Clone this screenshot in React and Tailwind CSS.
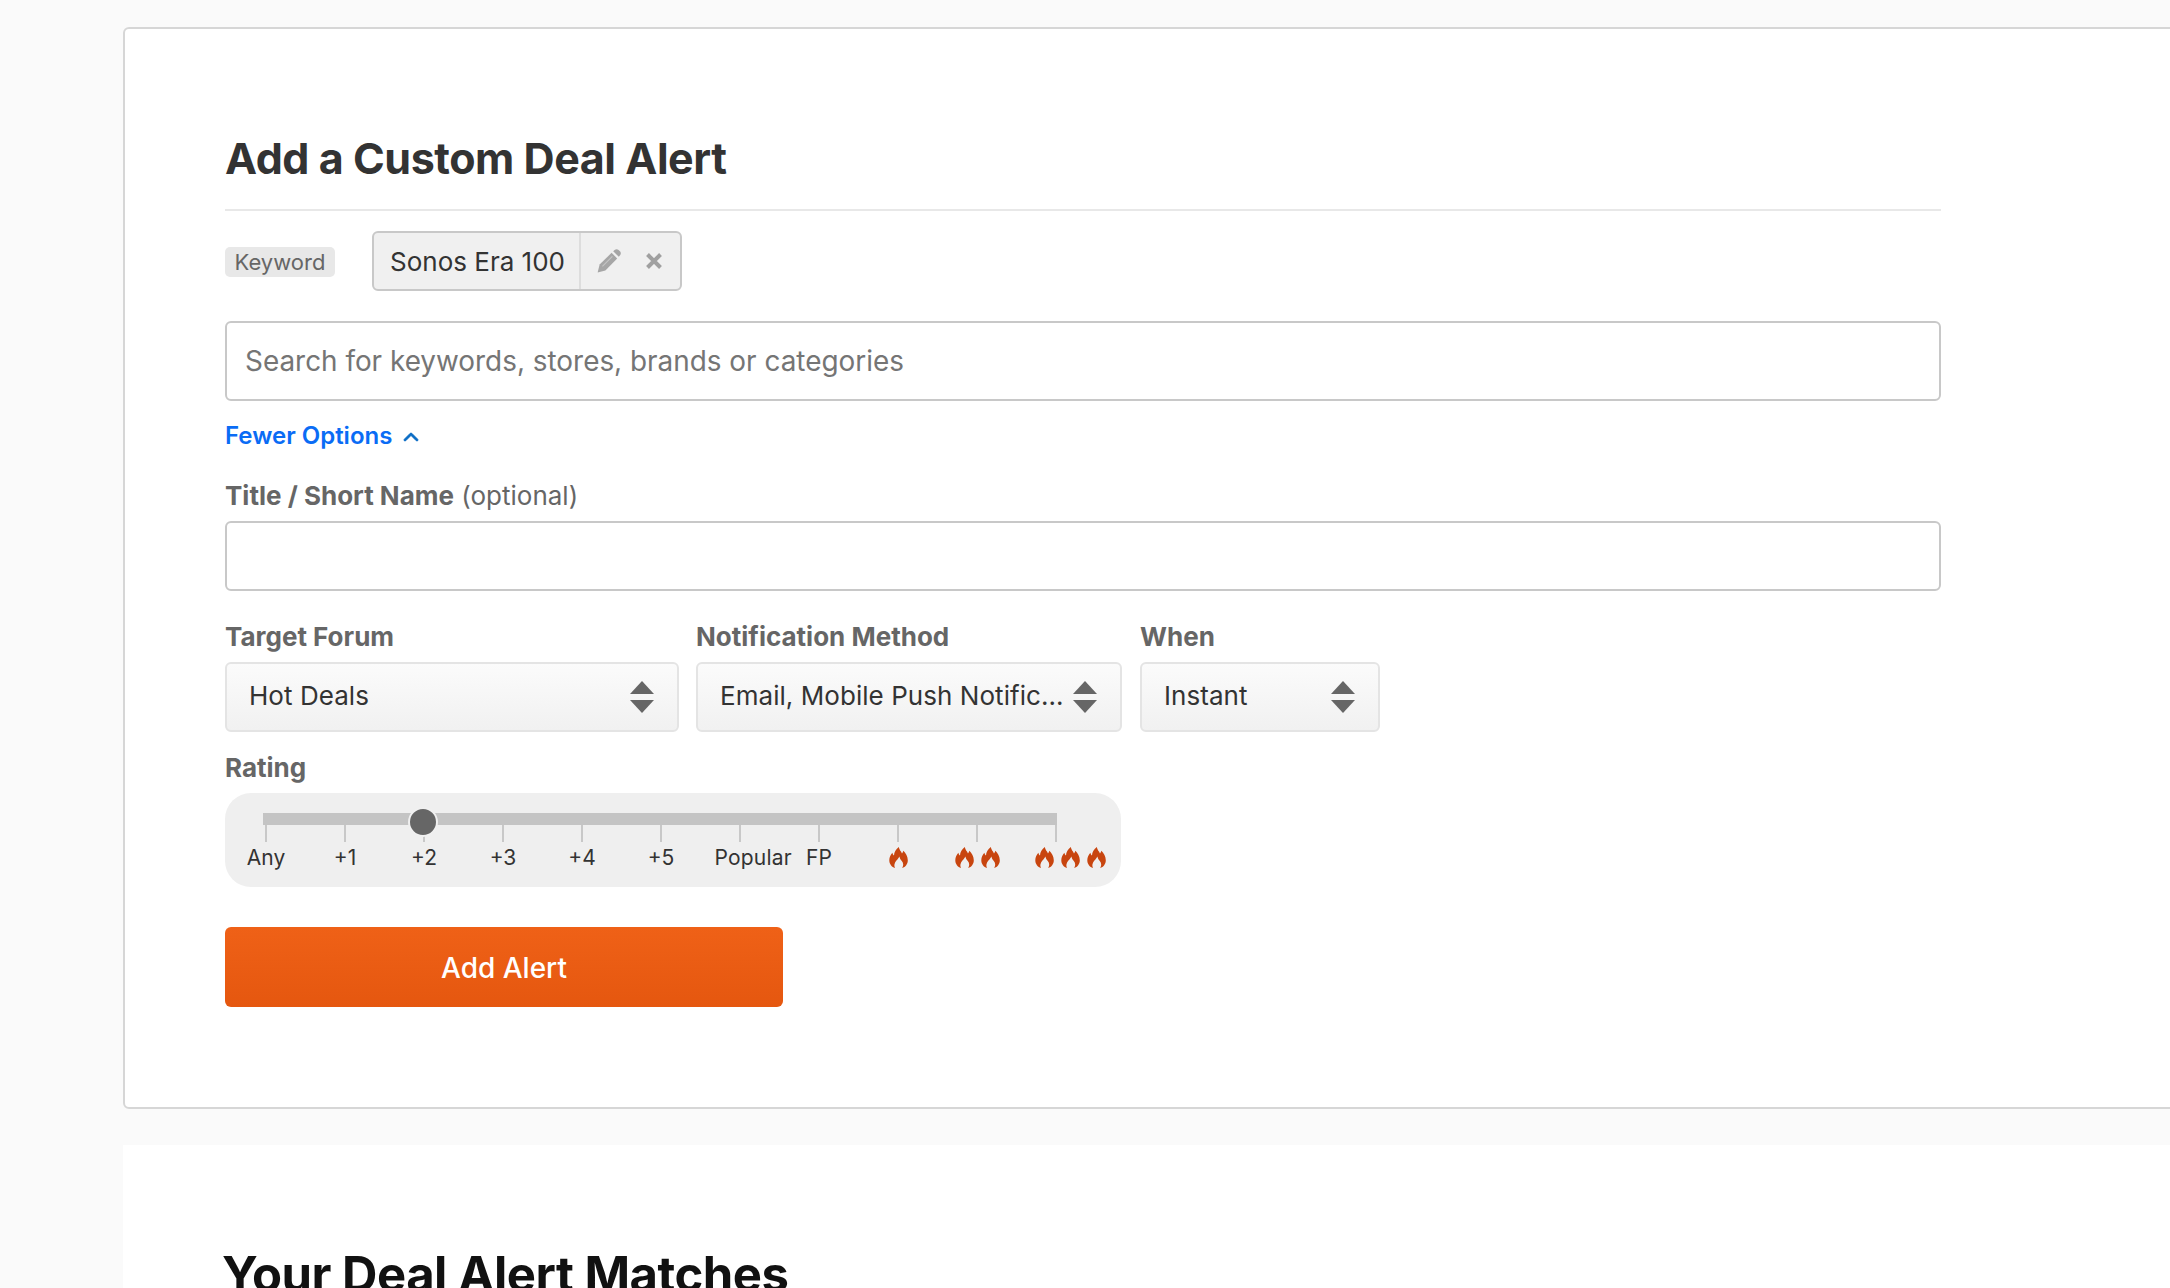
import React from "react";
import { FaChevronUp } from "react-icons/fa6";

const ticks = [0, 1, 2, 3, 4, 5, 6, 7, 8, 9, 10];

const FlameIcon = () => (
    <svg viewBox="0 0 19 21" className="w-[19px] h-[21px] shrink-0" fill="currentColor">
        <path d="M9.8 0C10.2 2.8 12 4.2 13 6.4C13.6 5.6 14 4.8 14.4 3.8C16.8 6.4 18.8 9.6 18.8 13.2C18.8 17 16.4 20 13.2 21C14.8 18.4 14.4 16 12.8 14C11.6 12.6 10.8 11.2 10.4 9.4C9.4 11.4 8.6 12 7.4 13.6C5.6 16 4.6 18.4 6 21C2.8 20 .3 17 .3 13.2C.3 10 1.8 7.8 3.4 5.8C3.6 7 4.2 8 5 8.6C5 5.2 7.2 2 9.8 0Z" />
    </svg>
);

const PencilIcon = () => (
    <svg viewBox="0 0 24 24" className="ml-[16px] w-[24px] h-[24px] shrink-0 text-[#a6a6a6]" fill="currentColor">
        <path d="M.6 23.6L2.6 15.6L14.6 3.8L20.2 9.4L8.4 21.4Z" />
        <path d="M16.2 2.2L17.6 .9C18.8 -.1 20.4 -.1 21.6 .9L23 2.3C24.1 3.5 24.1 5 23.1 6.2L21.8 7.8Z" />
        <path d="M5.4 17.4L15.4 7.4" stroke="#c4c4c4" strokeWidth="1.2" />
    </svg>
);

const CloseIcon = () => (
    <svg viewBox="0 0 16 16" className="ml-[25px] w-[16px] h-[16px] shrink-0 text-[#a0a0a0]" stroke="currentColor" strokeWidth="4" strokeLinecap="butt">
        <path d="M1.5 1.5L14.5 14.5M14.5 1.5L1.5 14.5" />
    </svg>
);

const Flames = ({ count, className = "" }) => (
    <span className={`flex items-center justify-center gap-[7px] text-[#c8450f] ${className}`}>
        {Array.from({ length: count }).map((_, i) => (
            <FlameIcon key={i} />
        ))}
    </span>
);

const Select = ({ label, value, className }) => (
    <div className={className}>
        <label className="block h-[27px] mb-[12px] text-[26px] leading-[27px] font-bold text-[#666666]">{label}</label>
        <div className="flex items-center justify-between h-[70px] pl-[22px] pr-[23px] rounded-[6px] border-2 border-[#e4e4e4] bg-gradient-to-b from-[#fbfbfb] to-[#f1f1f1]">
            <span className="text-[26px] leading-[32px] pb-[2px] text-[#333333] whitespace-nowrap tracking-[0.05px]">{value}</span>
            <span className="flex flex-col gap-[6px] shrink-0">
                <span className="block w-0 h-0 border-x-[12px] border-x-transparent border-b-[13px] border-b-[#666666]" />
                <span className="block w-0 h-0 border-x-[12px] border-x-transparent border-t-[13px] border-t-[#666666]" />
            </span>
        </div>
    </div>
);

export default function App() {
    return (
        <div className="h-[1288px] overflow-hidden bg-[#fafafa] pt-[27px] pl-[123px] font-['Inter',sans-serif]">
            {/* Alert form card */}
            <div className="w-[2200px] h-[1082px] rounded-l-[6px] border-2 border-[#d6d6d6] bg-white pt-[104px] pl-[100px]">
                <div className="w-[1716px]">
                    <h2 className="text-[43px] leading-[50px] font-bold text-[#333333] tracking-[-0.45px] pb-[26px] border-b-2 border-[#e8e8e8]">
                        Add a Custom Deal Alert
                    </h2>

                    <div className="flex items-center gap-[37px] mt-[20px]">
                        <span className="h-[30px] w-[110px] flex items-center justify-center rounded-[5px] bg-[#e8e8e8] text-[22px] text-[#666666] mt-[2px]">
                            Keyword
                        </span>
                        <div className="flex h-[60px] w-[310px] items-center rounded-[6px] border-2 border-[#c8c8c8] bg-[#f0f0f0]">
                            <span className="w-[207px] pl-[16px] text-[26px] text-[#333333] whitespace-nowrap border-r-2 border-[#dddddd] h-full flex items-center">
                                Sonos Era 100
                            </span>
                            <PencilIcon />
                            <CloseIcon />
                        </div>
                    </div>

                    <input
                        readOnly
                        placeholder="Search for keywords, stores, brands or categories"
                        className="block w-full h-[80px] mt-[30px] px-[18px] rounded-[6px] border-2 border-[#c8c8c8] bg-white text-[27.9px] placeholder:text-[#757575] outline-none"
                    />

                    <div className="flex items-center gap-[11px] mt-[20px] h-[30px]">
                        <span className="text-[24px] font-semibold text-[#0a6cf5]">Fewer Options</span>
                        <FaChevronUp className="w-[16px] h-[16px] mt-[4px] text-[#0a6cc4]" stroke="currentColor" strokeWidth="30" />
                    </div>

                    <div className="mt-[30px] h-[30px] text-[26px] leading-[30px] text-[#666666]">
                        <span className="font-bold">Title / Short Name</span> (optional)
                    </div>
                    <div className="h-[70px] mt-[10px] rounded-[6px] border-2 border-[#c8c8c8] bg-white" />

                    <div className="flex mt-[32px]">
                        <Select label="Target Forum" value="Hot Deals" className="w-[454px]" />
                        <Select label="Notification Method" value="Email, Mobile Push Notific..." className="w-[426px] ml-[17px]" />
                        <Select label="When" value="Instant" className="w-[240px] ml-[18px]" />
                    </div>

                    <div className="mt-[22px] h-[27px] text-[26px] leading-[27px] font-bold text-[#666666]">Rating</div>

                    {/* Rating slider */}
                    <div className="relative w-[896px] h-[94px] mt-[12px] rounded-[26px] bg-[#efefef] pt-[20px] pl-[38px]">
                        <div className="w-[794px] h-[12px] bg-[#c4c4c4]" />
                        <span className="absolute left-[183px] top-[14px] w-[30px] h-[30px] rounded-full bg-[#666666] border-2 border-[#f0f0f0]" />
                        <div className="grid grid-cols-[repeat(11,79px)] -ml-[36.5px]">
                            {ticks.map((t) => (
                                <span key={t} className="justify-self-center block w-[2px] h-[17px] bg-[#c8c8c8]" />
                            ))}
                        </div>
                        <div className="grid grid-cols-[repeat(11,79px)] -ml-[36.5px] h-[30px] items-center text-[21px] text-[#333333] text-center">
                            <span>Any</span>
                            <span>+1</span>
                            <span>+2</span>
                            <span>+3</span>
                            <span>+4</span>
                            <span>+5</span>
                            <span className="ml-[14px] whitespace-nowrap tracking-[0.2px]">Popular</span>
                            <span>FP</span>
                            <Flames count={1} />
                            <Flames count={2} />
                            <Flames count={3} className="translate-x-[14px]" />
                        </div>
                    </div>

                    <button
                        type="button"
                        className="block w-[558px] h-[80px] mt-[40px] pt-[2px] rounded-[6px] bg-gradient-to-b from-[#ef6117] to-[#e5570f] text-[28px] font-medium text-white"
                    >
                        Add Alert
                    </button>
                </div>
            </div>

            {/* Matches card, cut off by the window */}
            <div className="w-[2200px] h-[400px] mt-[36px] bg-white pt-[102px] pl-[99px]">
                <h2 className="text-[49px] leading-[56px] font-bold text-[#111111] tracking-[-0.5px]">Your Deal Alert Matches</h2>
            </div>
        </div>
    );
}
